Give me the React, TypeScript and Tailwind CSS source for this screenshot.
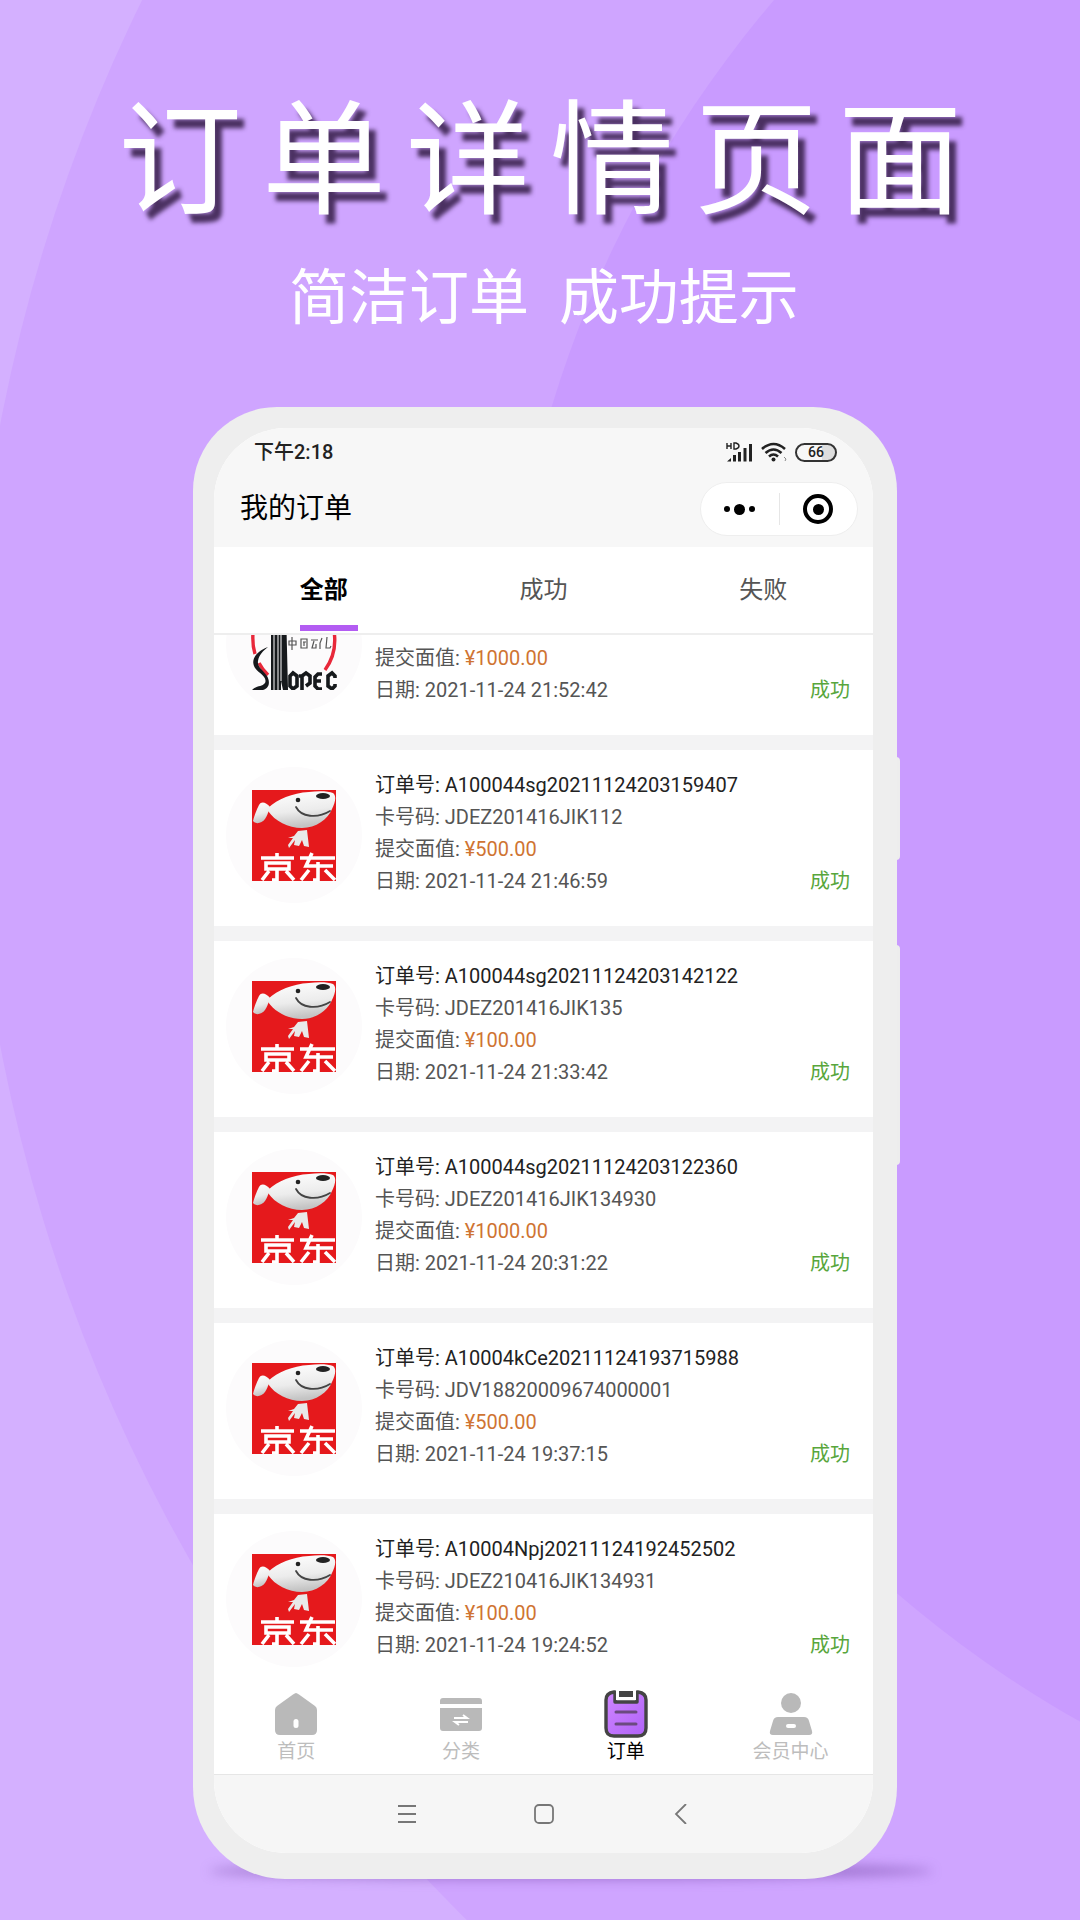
import React from "react";

type Order = {
  brand: "sinopec" | "jd";
  order: string;
  card: string;
  price: string;
  date: string;
};

const orders: Order[] = [
  { brand: "sinopec", order: "", card: "", price: "¥1000.00", date: "2021-11-24 21:52:42" },
  { brand: "jd", order: "A100044sg20211124203159407", card: "JDEZ201416JIK112", price: "¥500.00", date: "2021-11-24 21:46:59" },
  { brand: "jd", order: "A100044sg20211124203142122", card: "JDEZ201416JIK135", price: "¥100.00", date: "2021-11-24 21:33:42" },
  { brand: "jd", order: "A100044sg20211124203122360", card: "JDEZ201416JIK134930", price: "¥1000.00", date: "2021-11-24 20:31:22" },
  { brand: "jd", order: "A10004kCe20211124193715988", card: "JDV18820009674000001", price: "¥500.00", date: "2021-11-24 19:37:15" },
  { brand: "jd", order: "A10004Npj20211124192452502", card: "JDEZ210416JIK134931", price: "¥100.00", date: "2021-11-24 19:24:52" },
];

function Backdrop() {
  return (
    <svg className="absolute inset-0 h-full w-full" viewBox="0 0 1080 1920" preserveAspectRatio="xMidYMid slice" aria-hidden="true">
      <rect width="1080" height="1920" fill="#d4b0ff" />
      <circle cx="1635" cy="735" r="1664" fill="#cfa5ff" />
      <circle cx="1635" cy="735" r="1132" fill="#c99bff" />
    </svg>
  );
}

function JdLogo() {
  return (
    <svg className="h-[91px] w-[84px]" viewBox="0 0 84 91" role="img" aria-label="京东">
      <defs>
        <linearGradient id="dog" x1="0" y1="0" x2="0.2" y2="1">
          <stop offset="0" stopColor="#ffffff" />
          <stop offset="0.6" stopColor="#ececec" />
          <stop offset="1" stopColor="#c4c4c4" />
        </linearGradient>
      </defs>
      <rect width="84" height="91" fill="#e5191c" />
      <path d="M18 17C14 12 9 11 7 15C4 21 2 27 1 31C4 35 10 33 13 29C15 26 16 23 17 20Z" fill="url(#dog)" />
      <path d="M16 18C26 9 40 3 57 2C66 1 76 1 81 3C85 6 83 13 80 19C76 29 64 38 50 38C36 38 23 31 16 21Z" fill="url(#dog)" />
      <ellipse cx="71" cy="6" rx="7" ry="3" fill="#222" />
      <circle cx="46" cy="10" r="2.3" fill="#222" />
      <path d="M44 17C49 27 65 29 78 21" fill="none" stroke="#444" strokeWidth="1.8" strokeLinecap="round" />
      <path d="M46 41L55 40L57 57L52 56L50 50L47 56L42 55L43 50L37 58L36 55L41 48L36 48L42 46Z" fill="#e9e9e9" />
      <g fill="none" stroke="#fff" strokeWidth="3.600">
        <path d="M9 68H42M25 63V68M14 73H37V79H14ZM25 79V90H20M17 81L10 90M34 81L42 90" />
        <path d="M48 68H83M60 63L54 76H81M66 72V90H61M57 80L49 90M73 80L83 90" />
      </g>
    </svg>
  );
}

function SinopecLogo() {
  return (
    <svg className="h-[91px] w-[86px]" viewBox="0 0 86 91" role="img" aria-label="SINOPEC">
      <g fill="none" stroke="#e8283a" strokeWidth="3.4">
        <path d="M4 20C1 34 1 45 4 55M8 64C10 68 13 72 17 76M80 20C86 38 85 56 74 71" />
      </g>
      <path d="M17 48C6 52 0 60 3 67C6 74 17 77 14 84C11 88 6 86 1 91H12C19 89 19 82 16 77C12 71 6 68 7 62C8 56 12 52 17 48Z" fill="#16191c" />
      <path d="M20 10H35L37 91H32L30 82V91H20Z" fill="#16191c" />
      <path d="M23 10V91M27 10V91M30 30V82" stroke="#fff" strokeWidth="1" />
      <g fill="none" stroke="#16191c" strokeWidth="3.600">
        <path d="M39 77L42 74L46 77V87L42 90L39 87Z" />
        <path d="M51 91V77L55 74L59 77V84L55 87M51 77H48" />
        <path d="M71 75H67L64 78V87L67 90H71M64 82H70" />
        <path d="M84 79V77L81 74L77 77V87L81 90L84 87V85" />
      </g>
      <path d="M38 42H45V46H38ZM41 38V51M50 40H56V49H50ZM52 43H55M53 43V47M60 41H67M63 42L61 49H65V45M71 39L69 44V50M76 38L75 49H79L80 47" fill="none" stroke="#555" strokeWidth="1.2" />
    </svg>
  );
}

function OrderCard({ item }: { item: Order }) {
  return (
    <li className="flex bg-white pt-[19px] pr-[23px] pb-[29px] pl-3">
      <div className="-mt-0.5 -mb-1.5 flex size-[136px] shrink-0 items-center justify-center rounded-full bg-[#fcfbfc]">
        {item.brand === "jd" ? <JdLogo /> : <SinopecLogo />}
      </div>
      <div className="ml-[13px] flex-1 text-[20px] leading-8 text-[#555]">
        <p className="text-[#222]">订单号: {item.order}</p>
        <p>卡号码: {item.card}</p>
        <p>
          提交面值: <span className="text-[#cf7432]">{item.price}</span>
        </p>
        <div className="flex justify-between">
          <p>日期: {item.date}</p>
          <p className="text-[#58a63c]">成功</p>
        </div>
      </div>
    </li>
  );
}

function StatusIcons() {
  return (
    <div className="flex items-center gap-2">
      <svg className="h-5 w-[28px]" viewBox="0 0 28 20" aria-label="HD signal" role="img">
        <path d="M2 1V7M2 4H6M6 1V7M9 1V7H11Q14 6 14 4Q14 2 11 1Z" fill="none" stroke="#222" strokeWidth="1.4" />
        <path d="M2 19.500L6 16V19.500ZM8 13H11V19.500H8ZM13 10H16V19.500H13ZM18.500 6H21.500V19.500H18.500ZM24 2H27V19.500H24Z" fill="#222" />
      </svg>
      <svg className="h-5 w-[26px]" viewBox="0 0 26 20" aria-label="Wi-Fi" role="img">
        <g fill="none" stroke="#222" strokeWidth="2.600">
          <path d="M1 7Q12.500 -3 24 7M4.500 11Q12.500 4 20.500 11M8 14.500Q12.500 10.500 17 14.500" />
        </g>
        <circle cx="12.500" cy="17.500" r="2" fill="#222" />
        <path d="M23 15L25 17L24 19" fill="none" stroke="#888" />
      </svg>
      <div className="flex h-[19px] w-[42px] items-center justify-center rounded-full border-2 border-[#333] bg-linear-to-r from-[#f7f7f7] from-65% to-[#dedede] to-65% text-[14px] leading-none font-medium text-[#222]">
        66
      </div>
    </div>
  );
}

const HomeIcon = () => (
  <svg className="size-12" viewBox="0 0 48 48" aria-hidden="true">
    <path d="M24 3Q25 3 27 4.500L43 16Q45 17.500 45 20V40Q45 45 40 45H8Q3 45 3 40V20Q3 17.500 5 16L21 4.500Q23 3 24 3Z" fill="#b9b9b9" />
    <rect x="21.500" y="29" width="5" height="9" rx="2.500" fill="#fff" />
  </svg>
);

const CategoryIcon = () => (
  <svg className="size-12" viewBox="0 0 48 48" aria-hidden="true">
    <path d="M3 14V11Q3 8 6 8H42Q45 8 45 11V14ZM3 18H45V38Q45 41 42 41H6Q3 41 3 38Z" fill="#b9b9b9" />
    <path d="M17 28H30L26 25M31 32H18L22 35" fill="none" stroke="#fff" strokeWidth="2" />
  </svg>
);

const OrdersIcon = () => (
  <svg className="size-12" viewBox="0 0 48 48" aria-hidden="true">
    <defs>
      <linearGradient id="board" x1="0" y1="0" x2="1" y2="1">
        <stop offset="0" stopColor="#cf86ff" />
        <stop offset="1" stopColor="#b062f8" />
      </linearGradient>
    </defs>
    <path d="M13 2H12Q4 3 4 10V38Q4 46 12 46H36Q44 46 44 38V10Q44 3 36 2H35V12H13V2Z" fill="url(#board)" stroke="#444" strokeWidth="3.400" strokeLinejoin="round" />
    <path d="M14 0H34V10H14Z" fill="#fff" />
    <rect x="17" y="1" width="14" height="6" fill="#444" />
    <path d="M14 22H34M14 34H34" stroke="#6b4a80" strokeWidth="3" strokeLinecap="round" />
  </svg>
);

const MemberIcon = () => (
  <svg className="size-12" viewBox="0 0 48 48" aria-hidden="true">
    <circle cx="24" cy="13" r="10" fill="#b9b9b9" />
    <path d="M11 27H37Q41 27 42 31L45 41Q46 45 42 45H6Q2 45 3 41L6 31Q7 27 11 27Z" fill="#b9b9b9" />
    <rect x="19" y="34" width="10" height="4" rx="2" fill="#fff" />
  </svg>
);

const navItems = [
  { label: "首页", Icon: HomeIcon, active: false },
  { label: "分类", Icon: CategoryIcon, active: false },
  { label: "订单", Icon: OrdersIcon, active: true },
  { label: "会员中心", Icon: MemberIcon, active: false },
];

function Phone() {
  return (
    <section className="relative mt-[70px] ml-[10px] w-[704px] max-w-full">
      <div className="absolute bottom-0 left-4 h-4 w-[724px] rounded-[50%] bg-[#6b3f9e]/50 blur-[6px]" />
      <div className="absolute top-[350px] -right-[3px] h-[103px] w-2 rounded bg-[#ededed]" />
      <div className="absolute top-[538px] -right-[3px] h-[220px] w-2 rounded bg-[#ededed]" />
      <div className="relative rounded-t-[84px] rounded-b-[92px] bg-[#eee] pt-[21px] pr-6 pb-[26px] pl-[21px]">
        <div className="overflow-hidden rounded-[72px] bg-white">
          <header className="bg-[#f7f7f7] pb-[11px]">
            <div className="flex h-12 items-center justify-between pr-9 pl-10 text-[20px] font-medium text-[#222]">
              <span>下午2:18</span>
              <StatusIcons />
            </div>
            <div className="mt-[6px] flex items-center justify-between pr-[15px] pl-[26px]">
              <h2 className="text-[28px] leading-10 text-black">我的订单</h2>
              <div className="flex h-[54px] w-[158px] items-center rounded-full border border-[#eee] bg-white">
                <button type="button" aria-label="更多" className="flex flex-1 items-center justify-center gap-1">
                  <span className="size-[6px] rounded-full bg-black" />
                  <span className="size-[11px] rounded-full bg-black" />
                  <span className="size-[6px] rounded-full bg-black" />
                </button>
                <span className="h-8 w-px bg-[#e6e6e6]" />
                <button type="button" aria-label="关闭" className="flex flex-1 items-center justify-center">
                  <span className="flex size-[30px] items-center justify-center rounded-full border-4 border-black">
                    <span className="size-[11px] rounded-full bg-black" />
                  </span>
                </button>
              </div>
            </div>
          </header>

          <div role="tablist" className="grid h-[88px] grid-cols-3 border-b-2 border-[#eee] bg-white text-[24px]">
            <button type="button" role="tab" aria-selected="true" className="font-bold text-black">
              <span className="relative inline-flex h-full items-center">
                全部
                <span className="absolute bottom-[2px] left-0 h-[6px] w-[58px] bg-[#b35cf2]" />
              </span>
            </button>
            <button type="button" role="tab" aria-selected="false" className="text-[#555]">成功</button>
            <button type="button" role="tab" aria-selected="false" className="text-[#555]">失败</button>
          </div>

          <div className="h-[1041px] overflow-hidden bg-[#f3f3f4]">
            <ul className="-mt-[76px] flex flex-col gap-[15px]">
              {orders.map((item) => (
                <OrderCard key={item.date} item={item} />
              ))}
            </ul>
          </div>

          <nav className="grid h-[98px] grid-cols-4 bg-white pt-[14px]">
            {navItems.map(({ label, Icon, active }) => (
              <a key={label} href="#" className={active ? "flex flex-col items-center text-[19px] leading-7 text-black" : "flex flex-col items-center text-[19px] leading-7 text-[#bdbdbd]"}>
                <Icon />
                {label}
              </a>
            ))}
          </nav>

          <div className="flex h-[79px] items-center justify-center gap-[117px] border-t border-[#e6e6e6] bg-[#f6f6f6]">
            <button type="button" aria-label="菜单">
              <svg className="size-5" viewBox="0 0 20 20"><path d="M1 2H19M1 10H19M1 18H19" stroke="#777" strokeWidth="1.800" /></svg>
            </button>
            <button type="button" aria-label="主屏幕">
              <svg className="size-5" viewBox="0 0 20 20"><rect x="1" y="1" width="18" height="18" rx="4" fill="none" stroke="#777" strokeWidth="1.800" /></svg>
            </button>
            <button type="button" aria-label="返回">
              <svg className="size-5" viewBox="0 0 20 20"><path d="M15 0L5 10L15 20" fill="none" stroke="#777" strokeWidth="1.800" /></svg>
            </button>
          </div>
        </div>
      </div>
    </section>
  );
}

export default function App() {
  return (
    <main className="relative min-h-screen overflow-hidden bg-[#d4b0ff] pb-10 font-[Roboto,'Noto_Sans_CJK_SC',sans-serif]">
      <Backdrop />
      <div className="relative flex flex-col items-center">
        <h1 className="flex gap-5 pt-[86px] text-[124px] leading-[152px] text-white text-shadow-[7px_9px_4px_rgb(60_35_80/0.9)]">
          {Array.from("订单详情页面").map((char) => (
            <span key={char}>{char}</span>
          ))}
        </h1>
        <p className="mt-[23px] pl-2 text-[60px] leading-[76px] whitespace-pre text-white">简洁订单{"  "}成功提示</p>
        <Phone />
      </div>
    </main>
  );
}
